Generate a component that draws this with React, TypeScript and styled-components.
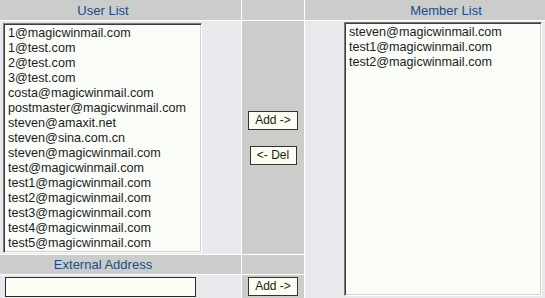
import React, { useState } from "react";
import styled, { createGlobalStyle } from "styled-components";

const GlobalStyle = createGlobalStyle`
  html, body {
    margin: 0;
    padding: 0;
    background: #ffffff;
  }
  body {
    font-family: "Liberation Sans", Arial, sans-serif;
  }
`;

const Table = styled.div`
  display: grid;
  grid-template-columns: 241px 62px 1fr;
  grid-template-rows: 20px 233px 19px 1fr;
  gap: 1px;
  width: 545px;
  height: 298px;
  background: #ffffff;
  overflow: hidden;
`;

const HeadCell = styled.div<{ $shift?: number }>`
  display: flex;
  align-items: center;
  justify-content: center;
  background: #cbcdca;
  color: #1b4a8a;
  font-size: 13px;
  padding-left: ${(p) => (p.$shift && p.$shift > 0 ? p.$shift : 0)}px;
  padding-right: ${(p) => (p.$shift && p.$shift < 0 ? -p.$shift : 0)}px;
`;

const BodyCell = styled.div`
  background: #e9e8ec;
  padding: 2px 0 0 3px;
`;

const MiddleCell = styled.div`
  display: flex;
  flex-direction: column;
  align-items: center;
  justify-content: center;
  gap: 16px;
  background: #cbcdca;
  padding-top: 1px;
`;

const MemberCell = styled.div`
  grid-column: 3;
  grid-row: 2 / span 3;
  background: #e9e8ec;
  padding: 1px 0 0 39px;
`;

const InputCell = styled.div`
  background: #e9e8ec;
  padding: 2px 0 0 5px;
`;

const GrayCell = styled.div`
  background: #cbcdca;
`;

const ButtonCell = styled.div`
  display: flex;
  justify-content: center;
  align-items: flex-start;
  background: #cbcdca;
  padding-top: 2px;
`;

const ListBox = styled.div<{ $w: number; $h: number }>`
  box-sizing: border-box;
  width: ${(p) => p.$w}px;
  height: ${(p) => p.$h}px;
  background: #fafcf8;
  border-style: solid;
  border-width: 1px;
  border-color: #7a7a7a #ffffff #ffffff #7a7a7a;
  box-shadow: inset 1px 1px 0 #3c3c3c, inset -1px -1px 0 #d4d2cc;
  padding: 2px 0 0 4px;
  overflow: hidden;
`;

const Item = styled.div`
  font-size: 12.6px;
  line-height: 15px;
  color: #1c1c1c;
  white-space: nowrap;
`;

const Button = styled.button<{ $w: number }>`
  box-sizing: border-box;
  width: ${(p) => p.$w}px;
  height: 19px;
  padding: 0;
  background: #fcfcf0;
  border: 1px solid #333333;
  color: #1c1c1c;
  font-family: "Liberation Sans", Arial, sans-serif;
  font-size: 12px;
  line-height: 17px;
  cursor: pointer;
`;

const TextInput = styled.input`
  box-sizing: border-box;
  width: 191px;
  height: 20px;
  background: #fcfdf5;
  border: 1px solid #2a2a2a;
  padding: 0 3px;
  font-family: "Liberation Sans", Arial, sans-serif;
  font-size: 13px;
  outline: none;
`;

const users = [
  "1@magicwinmail.com",
  "1@test.com",
  "2@test.com",
  "3@test.com",
  "costa@magicwinmail.com",
  "postmaster@magicwinmail.com",
  "steven@amaxit.net",
  "steven@sina.com.cn",
  "steven@magicwinmail.com",
  "test@magicwinmail.com",
  "test1@magicwinmail.com",
  "test2@magicwinmail.com",
  "test3@magicwinmail.com",
  "test4@magicwinmail.com",
  "test5@magicwinmail.com",
];

const members = [
  "steven@magicwinmail.com",
  "test1@magicwinmail.com",
  "test2@magicwinmail.com",
];

export default function App() {
  const [external, setExternal] = useState("");

  return (
    <>
      <GlobalStyle />
      <Table>
        <HeadCell $shift={-35}>User List</HeadCell>
        <GrayCell />
        <HeadCell $shift={42}>Member List</HeadCell>

        <BodyCell>
          <ListBox $w={199} $h={230}>
            {users.map((u) => (
              <Item key={u}>{u}</Item>
            ))}
          </ListBox>
        </BodyCell>
        <MiddleCell>
          <Button $w={50}>Add -&gt;</Button>
          <Button $w={47}>&lt;- Del</Button>
        </MiddleCell>
        <MemberCell>
          <ListBox $w={198} $h={274}>
            {members.map((m) => (
              <Item key={m}>{m}</Item>
            ))}
          </ListBox>
        </MemberCell>

        <HeadCell $shift={-35}>External Address</HeadCell>
        <GrayCell />

        <InputCell>
          <TextInput value={external} onChange={(e) => setExternal(e.target.value)} />
        </InputCell>
        <ButtonCell>
          <Button $w={50}>Add -&gt;</Button>
        </ButtonCell>
      </Table>
    </>
  );
}
